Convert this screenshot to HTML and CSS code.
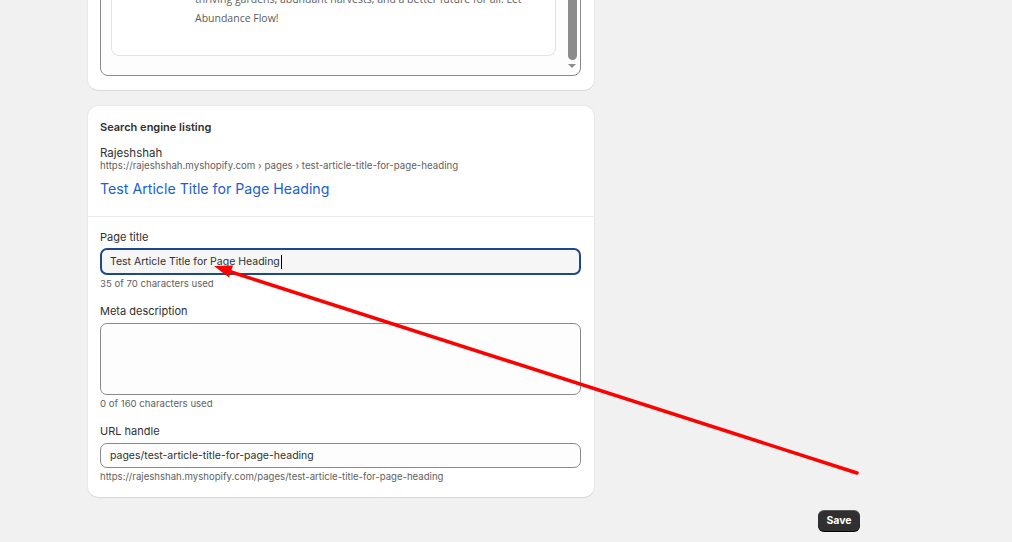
FILE: index.html
```html
<!DOCTYPE html>
<html>
<head>
<meta charset="utf-8">
<link rel="stylesheet" href="styles.css">
</head>
<body>
<div class="page">
  <div class="column">
    <section class="card card-top">
      <div class="editor">
        <div class="editor-inner">
          <p class="body-text">thriving gardens, abundant harvests, and a better future for all. Let</p>
          <p class="body-text">Abundance Flow!</p>
        </div>
        <div class="scrollbar">
          <div class="thumb"></div>
          <div class="arrow-down"></div>
        </div>
      </div>
    </section>

    <section class="card card-seo">
      <div class="seo-preview">
        <h2 class="section-title">Search engine listing</h2>
        <div class="store-name">Rajeshshah</div>
        <div class="crumb">https://rajeshshah.myshopify.com › pages › test-article-title-for-page-heading</div>
        <div class="preview-title">Test Article Title for Page Heading</div>
      </div>
      <div class="seo-form">
        <div class="field">
          <label class="label">Page title</label>
          <div class="input input-focus">Test Article Title for Page Heading<span class="caret"></span></div>
          <div class="help">35 of 70 characters used</div>
        </div>
        <div class="field">
          <label class="label">Meta description</label>
          <div class="textarea"></div>
          <div class="help">0 of 160 characters used</div>
        </div>
        <div class="field">
          <label class="label">URL handle</label>
          <div class="input">pages/test-article-title-for-page-heading</div>
          <div class="help">https://rajeshshah.myshopify.com/pages/test-article-title-for-page-heading</div>
        </div>
      </div>
    </section>
  </div>
  <div class="footer">
    <button class="save">Save</button>
  </div>
</div>
<svg class="annotation" width="1012" height="542" viewBox="0 0 1012 542">
  <line x1="857" y1="473" x2="228" y2="271" stroke="#ff0000" stroke-width="3.5" stroke-linecap="round"/>
  <polygon points="214,266 233,265.5 229,277.5" fill="#ff0000"/>
</svg>
</body>
</html>
```
FILE: styles.css
```css
* { box-sizing: border-box; }
html, body { margin: 0; padding: 0; }
body {
  background: #f1f1f1;
  font-family: Inter, "Liberation Sans", sans-serif;
  color: #303030;
  width: 1012px;
  height: 542px;
  overflow: hidden;
  position: relative;
}
.page {
  width: 772px;
  margin-left: 88px;
}
.column {
  width: 506px;
  display: flex;
  flex-direction: column;
  gap: 16px;
}
.card {
  background: #fff;
  border-radius: 10px;
  box-shadow: 0 1px 0 rgba(0,0,0,0.07), 0 0 0 1px rgba(0,0,0,0.03);
}
.card-top {
  margin-top: -60px;
  padding: 12px 13px 14px 12px;
}
.editor {
  border: 1px solid #8a8a8a;
  border-radius: 8px;
  background: #fdfdfd;
  display: flex;
  padding: 0 2px 0 10px;
  height: 124px;
}
.editor-inner {
  flex: 1;
  border: 1px solid #e3e3e3;
  border-top: none;
  border-radius: 0 0 8px 8px;
  background: #fff;
  margin-bottom: 19px;
  padding: 0 10px 27px 83px;
  display: flex;
  flex-direction: column;
  justify-content: flex-end;
}
.body-text {
  margin: 0;
  font-family: "Open Sans", "Noto Sans", sans-serif;
  font-size: 10.5px;
  line-height: 19px;
  color: #5c5c5c;
  white-space: nowrap;
}
.scrollbar {
  width: 12px;
  margin-left: 10px;
  display: flex;
  flex-direction: column;
  align-items: center;
}
.thumb {
  width: 9px;
  flex: 1;
  background: #8c8c8c;
  border-radius: 0 0 5px 5px;
  margin-bottom: 4px;
}
.arrow-down {
  width: 0;
  height: 0;
  border-left: 4px solid transparent;
  border-right: 4px solid transparent;
  border-top: 4px solid #8c8c8c;
  margin-bottom: 7px;
}
.card-seo {
  padding: 0;
}
.seo-preview {
  padding: 14px 12px 17px 12px;
  border-bottom: 1px solid #ebebeb;
}
.section-title {
  margin: 0 0 12px 0;
  font-size: 11px;
  font-weight: 600;
  color: #303030;
  line-height: 14px;
}
.store-name {
  font-size: 11.5px;
  line-height: 14px;
  color: #303030;
}
.crumb {
  font-size: 9.7px;
  line-height: 12px;
  color: #616161;
}
.preview-title {
  margin-top: 7px;
  font-size: 14.2px;
  line-height: 20px;
  color: #1a5fd0;
}
.seo-form {
  padding: 13px 13px 14px 12px;
  display: flex;
  flex-direction: column;
  gap: 14px;
}
.field {
  display: flex;
  flex-direction: column;
}
.label {
  font-size: 11px;
  line-height: 14px;
  color: #303030;
  margin-bottom: 5px;
}
.input {
  height: 25px;
  border: 1px solid #8a8a8a;
  border-radius: 7px;
  background: #fdfdfd;
  font-size: 10.5px;
  color: #303030;
  padding: 0 9px;
  display: flex;
  align-items: center;
}
.input-focus {
  border: 2px solid #1d4a86;
  background: #f6f6f6;
  height: 27px;
  padding: 0 8px;
  margin-top: -1px;
}
.caret {
  display: inline-block;
  width: 1px;
  height: 14px;
  background: #000;
  margin-left: 1px;
}
.textarea {
  height: 72px;
  border: 1px solid #8a8a8a;
  border-radius: 7px;
  background: #fdfdfd;
}
.help {
  font-size: 9.6px;
  line-height: 13px;
  color: #616161;
  margin-top: 2px;
}
.footer {
  display: flex;
  justify-content: flex-end;
  margin-top: 13px;
}
.save {
  font-family: Inter, "Liberation Sans", sans-serif;
  background: #303030;
  color: #fff;
  border: none;
  border-radius: 6px;
  font-size: 10.5px;
  font-weight: 700;
  height: 21px;
  width: 42px;
  padding: 0;
  box-shadow: 0 1px 0 #000, inset 0 1px 0 rgba(255,255,255,0.2);
}
.annotation {
  position: absolute;
  left: 0;
  top: 0;
  pointer-events: none;
}
```
